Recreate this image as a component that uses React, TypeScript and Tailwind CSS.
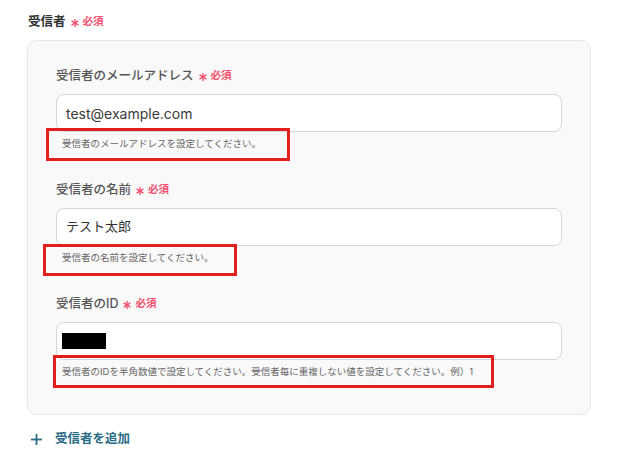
import React from "react";

const FONT = { fontFamily: '"Inter", "Noto Sans CJK JP", sans-serif' };

function Required() {
  return (
    <span className="inline-flex items-center ml-[5px] gap-[4px] text-[#f0506e]">
      <svg width="8" height="8" viewBox="0 0 8 8" className="mt-[2px]">
        <g stroke="#f0506e" strokeWidth="1.4" strokeLinecap="round">
          <line x1="4" y1="0.5" x2="4" y2="7.5" />
          <line x1="1" y1="2.2" x2="7" y2="5.8" />
          <line x1="1" y1="5.8" x2="7" y2="2.2" />
        </g>
      </svg>
      <span className="text-[10.5px] font-bold leading-[20px]">必須</span>
    </span>
  );
}

type FieldProps = {
  label: string;
  children: React.ReactNode;
  help: string;
  box: string;
};

function Field({ label, children, help, box }: FieldProps) {
  return (
    <div className="flex flex-col">
      <div className="flex items-center h-[20px] mb-[8px]">
        <span className="text-[12.5px] font-medium text-[#555] leading-[20px]">{label}</span>
        <Required />
      </div>
      <div className="h-[38px] w-[506px] rounded-[8px] border border-[#d4d6dc] bg-white flex items-center">
        {children}
      </div>
      <div className="relative mt-[4px] h-[16px]">
        <div className={`absolute border-[3px] border-[#e31e1e] ${box}`} />
        <span className="block pl-[6px] text-[9.5px] leading-[16px] text-[#666] whitespace-nowrap">{help}</span>
      </div>
    </div>
  );
}

export default function App() {
  return (
    <div className="w-[639px] h-[468px] bg-white overflow-hidden" style={FONT}>
      <div className="pl-[28px] pt-[12px] flex items-center h-[32px]">
        <span className="text-[12.5px] font-bold text-[#333] leading-[20px]">受信者</span>
        <Required />
      </div>
      <div className="mt-[8px] ml-[27px] w-[564px] rounded-[10px] border border-[#e5e5e5] bg-[#f9f9f9] pl-[28px] pr-[27px] pt-[25px] pb-[34px] flex flex-col gap-[28px]">
        <Field
          label="受信者のメールアドレス"
          help="受信者のメールアドレスを設定してください。"
          box="left-[-10px] top-[-8px] w-[244px] h-[33px]"
        >
          <span className="pl-[9px] text-[14px] text-[#3a3a3a]">test@example.com</span>
        </Field>
        <Field
          label="受信者の名前"
          help="受信者の名前を設定してください。"
          box="left-[-13px] top-[-6px] w-[194px] h-[32px]"
        >
          <span className="pl-[9px] text-[13px] text-[#333]">テスト太郎</span>
        </Field>
        <Field
          label="受信者のID"
          help="受信者のIDを半角数値で設定してください。受信者毎に重複しない値を設定してください。例）1"
          box="left-[-3px] top-[-9px] w-[441px] h-[33px]"
        >
          <span className="ml-[5px] w-[44px] h-[16px] bg-black" />
        </Field>
      </div>
      <div className="mt-[14px] ml-[31px] flex items-center h-[20px] gap-[13px] text-[#2a6b85]">
        <svg width="11" height="11" viewBox="0 0 11 11">
          <g stroke="#2a6b85" strokeWidth="1.8">
            <line x1="5.5" y1="0" x2="5.5" y2="11" />
            <line x1="0" y1="5.5" x2="11" y2="5.5" />
          </g>
        </svg>
        <span className="text-[12.5px] font-semibold leading-[20px]">受信者を追加</span>
      </div>
    </div>
  );
}
